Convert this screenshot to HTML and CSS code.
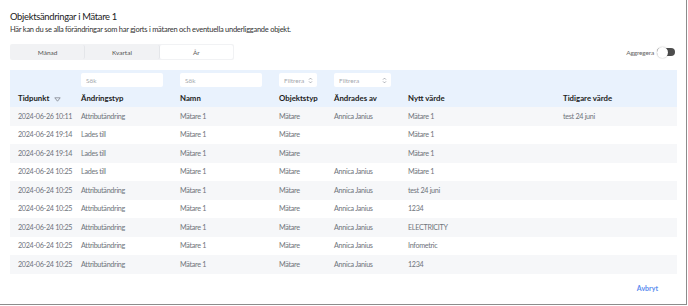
FILE: index.html
```html
<!DOCTYPE html>
<html lang="sv">
<head>
    <meta charset="UTF-8">
    <title>Objektsändringar</title>
    <link rel="stylesheet" href="styles.css">
</head>
<body>
    <div class="modal">
        <div class="modal-head">
            <h1>Objektsändringar i Mätare 1</h1>
            <p>Här kan du se alla förändringar som har gjorts i mätaren och eventuella underliggande objekt.</p>
        </div>

        <div class="toolbar">
            <div class="segments">
                <button class="segment">Månad</button>
                <button class="segment">Kvartal</button>
                <button class="segment active">År</button>
            </div>
            <label class="aggregate">
                Aggregera
                <span class="switch"><span class="knob"></span></span>
            </label>
        </div>

        <table class="changes">
            <colgroup>
                <col style="width:63px">
                <col style="width:99px">
                <col style="width:99px">
                <col style="width:55px">
                <col style="width:74px">
                <col style="width:155px">
                <col>
            </colgroup>
            <thead>
                <tr class="filters">
                    <th></th>
                    <th><input class="search" placeholder="Sök"></th>
                    <th><input class="search" placeholder="Sök"></th>
                    <th>
                        <div class="select short">Filtrera
                            <svg width="5" height="7" viewBox="0 0 5 7"><path d="M1 2.6 L2.5 1.1 L4 2.6 M1 4.4 L2.5 5.9 L4 4.4" fill="none" stroke="#8a8f98" stroke-width="0.7"/></svg>
                        </div>
                    </th>
                    <th>
                        <div class="select">Filtrera
                            <svg width="5" height="7" viewBox="0 0 5 7"><path d="M1 2.6 L2.5 1.1 L4 2.6 M1 4.4 L2.5 5.9 L4 4.4" fill="none" stroke="#8a8f98" stroke-width="0.7"/></svg>
                        </div>
                    </th>
                    <th></th>
                    <th></th>
                </tr>
                <tr class="labels">
                    <th>Tidpunkt
                        <svg class="sort" width="7" height="5" viewBox="0 0 7 5"><path d="M0.8 0.8 H6.2 L3.5 4.2 Z" fill="none" stroke="#8a8f98" stroke-width="0.9" stroke-linejoin="round"/></svg>
                    </th>
                    <th>Ändringstyp</th>
                    <th>Namn</th>
                    <th>Objektstyp</th>
                    <th>Ändrades av</th>
                    <th>Nytt värde</th>
                    <th>Tidigare värde</th>
                </tr>
            </thead>
            <tbody id="rows"></tbody>
        </table>

        <div class="footer">
            <button class="link">Avbryt</button>
        </div>
    </div>

    <script>
        const rows = [
            ['2024-06-26 10:11', 'Attributändring', 'Mätare 1', 'Mätare', 'Annica Janius', 'Mätare 1', 'test 24 juni'],
            ['2024-06-24 19:14', 'Lades till', 'Mätare 1', 'Mätare', '', 'Mätare 1', ''],
            ['2024-06-24 19:14', 'Lades till', 'Mätare 1', 'Mätare', '', 'Mätare 1', ''],
            ['2024-06-24 10:25', 'Lades till', 'Mätare 1', 'Mätare', 'Annica Janius', 'Mätare 1', ''],
            ['2024-06-24 10:25', 'Attributändring', 'Mätare 1', 'Mätare', 'Annica Janius', 'test 24 juni', ''],
            ['2024-06-24 10:25', 'Attributändring', 'Mätare 1', 'Mätare', 'Annica Janius', '1234', ''],
            ['2024-06-24 10:25', 'Attributändring', 'Mätare 1', 'Mätare', 'Annica Janius', 'ELECTRICITY', ''],
            ['2024-06-24 10:25', 'Attributändring', 'Mätare 1', 'Mätare', 'Annica Janius', 'Infometric', ''],
            ['2024-06-24 10:25', 'Attributändring', 'Mätare 1', 'Mätare', 'Annica Janius', '1234', '']
        ];

        document.getElementById('rows').innerHTML = rows
            .map(r => `<tr>${r.map(c => `<td>${c}</td>`).join('')}</tr>`)
            .join('');
    </script>
</body>
</html>
```

FILE: styles.css
```css
* {
    margin: 0;
    padding: 0;
    box-sizing: border-box;
    font-family: 'Lato', 'Noto Sans', sans-serif;
}

body {
    background: white;
    color: #1f2933;
}

.modal {
    width: 687px;
    height: 305px;
    border-right: 1px solid #8c8c8c;
    border-bottom: 1px solid #8c8c8c;
    padding: 9px 10px 0 10px;
    display: flex;
    flex-direction: column;
}

.modal-head h1 {
    font-size: 9.4px;
    font-weight: 400;
    letter-spacing: -0.3px;
    color: #222;
    line-height: 15px;
}

.modal-head p {
    font-size: 7.5px;
    letter-spacing: -0.25px;
    color: #333;
    line-height: 11px;
}

.toolbar {
    display: flex;
    justify-content: space-between;
    align-items: center;
    margin-top: 9px;
    padding-right: 1px;
}

.segments {
    display: flex;
    width: 224px;
    height: 16px;
    background: #f1f2f4;
    border-radius: 2px;
    padding: 1px;
}

.segment {
    flex: 1;
    border: none;
    background: transparent;
    font-size: 6.5px;
    color: #555;
    border-right: 1px solid #e4e6e9;
    border-radius: 2px;
}

.segment:last-child {
    border-right: none;
}

.segment.active {
    background: white;
}

.aggregate {
    display: flex;
    align-items: center;
    gap: 3px;
    font-size: 6.5px;
    letter-spacing: -0.15px;
    color: #666;
}

.switch {
    position: relative;
    width: 18px;
    height: 8px;
    background: #4d4d4d;
    border-radius: 4px;
}

.knob {
    position: absolute;
    left: 0;
    top: -1.5px;
    width: 11px;
    height: 11px;
    border-radius: 50%;
    background: white;
    box-shadow: 0 0 1.5px rgba(0, 0, 0, 0.35);
}

.changes {
    width: 667px;
    table-layout: fixed;
    border-collapse: collapse;
    margin-top: 10px;
}

.changes thead tr {
    background: #e9f2fd;
}

.changes th {
    text-align: left;
    padding-left: 8px;
    font-weight: 700;
    font-size: 7.8px;
    color: #222;
    white-space: nowrap;
}

.filters th {
    height: 20px;
    vertical-align: bottom;
    padding-bottom: 3px;
}

.labels th {
    height: 17px;
    vertical-align: middle;
    padding-bottom: 1px;
}

.sort {
    margin-left: 3px;
    vertical-align: middle;
}

.search {
    display: block;
    width: 82px;
    height: 14px;
    border: none;
    border-radius: 2px;
    background: white;
    font-size: 6.5px;
    padding-left: 5px;
    outline: none;
}

.search::placeholder {
    color: #a4a8ae;
}

.select {
    display: flex;
    justify-content: space-between;
    align-items: center;
    width: 57px;
    height: 14px;
    background: white;
    border-radius: 2px;
    padding: 0 4px 0 5px;
    font-size: 6.5px;
    font-weight: 400;
    color: #a4a8ae;
}

.select.short {
    width: 38px;
}

.changes td {
    height: 18.5px;
    padding-left: 8px;
    font-size: 7.2px;
    letter-spacing: -0.3px;
    color: #6f747b;
    white-space: nowrap;
}

.changes tbody tr:nth-child(odd) {
    background: #f6f7f9;
}

.footer {
    display: flex;
    justify-content: flex-end;
    padding: 10px 18px 0 0;
}

.link {
    border: none;
    background: none;
    color: #5b8def;
    font-size: 7px;
    font-weight: 700;
}
```
